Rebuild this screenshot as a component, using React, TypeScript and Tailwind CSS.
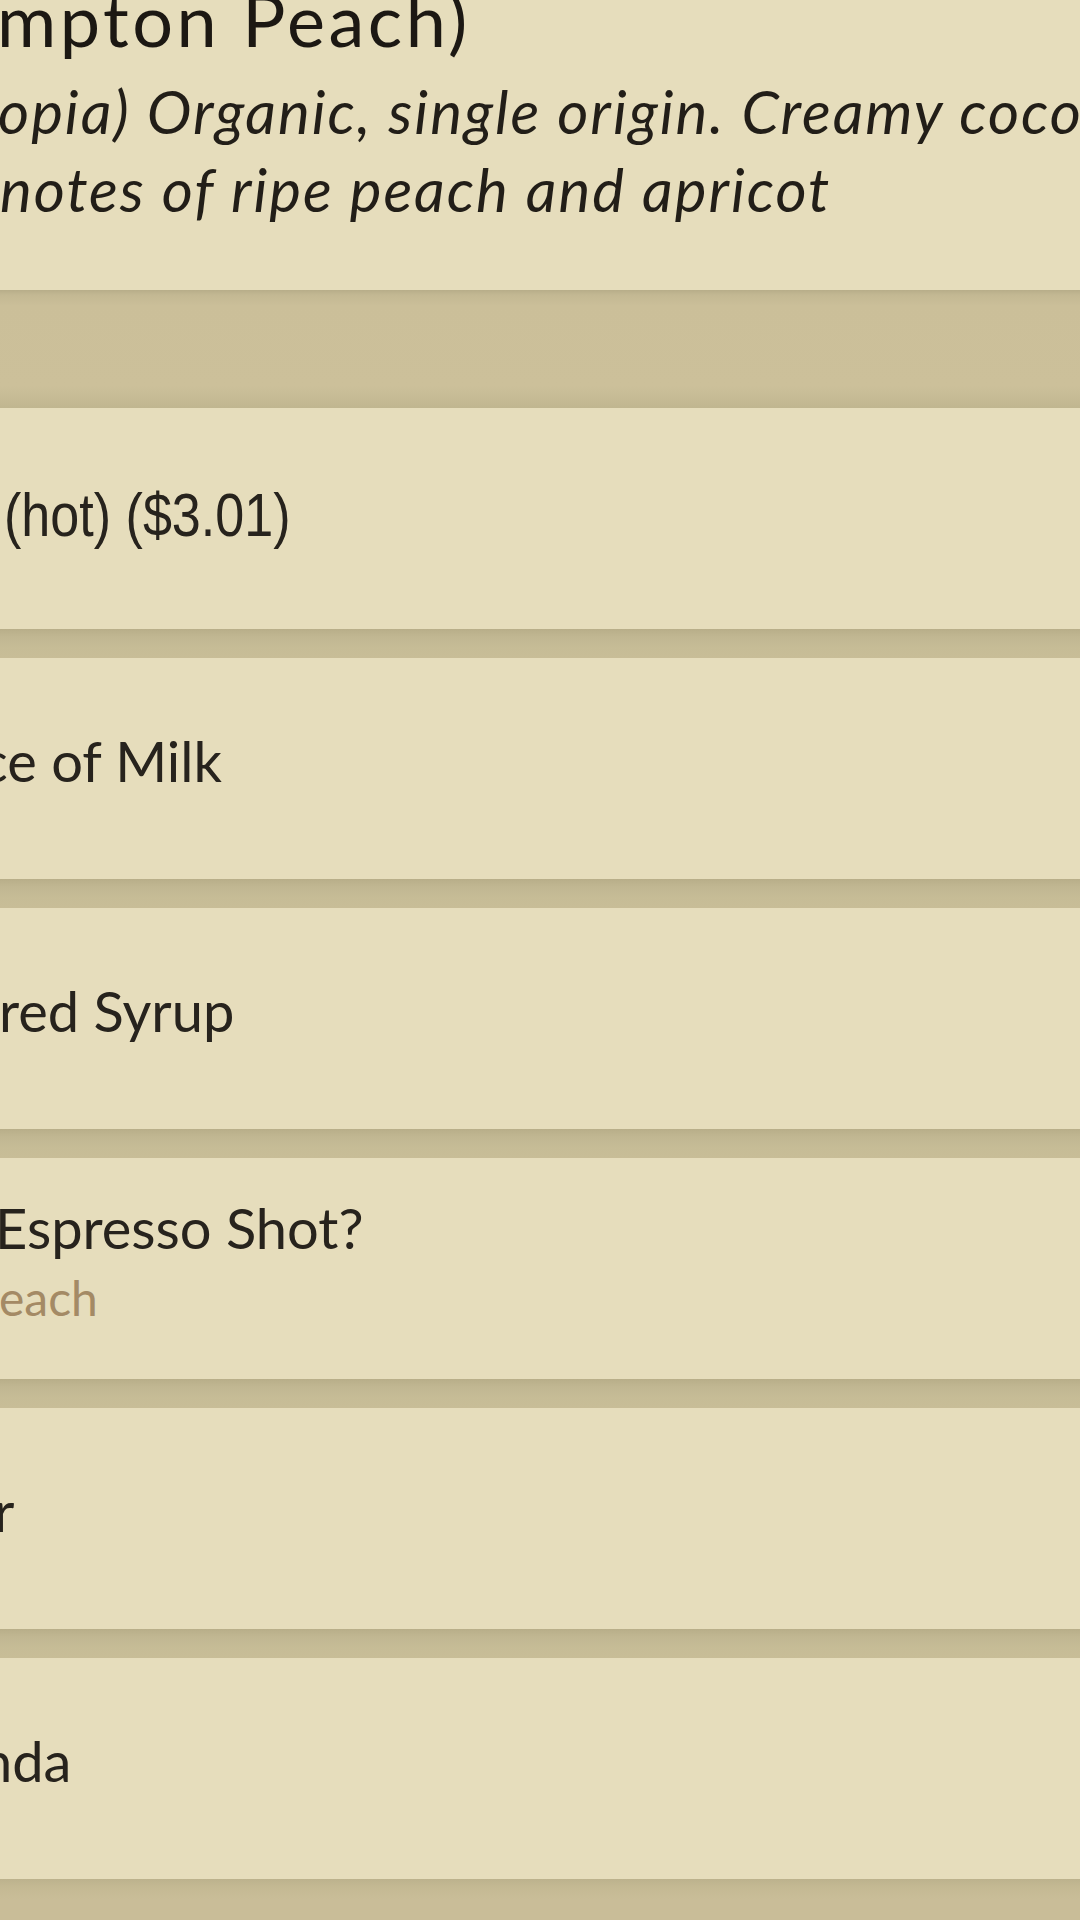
import React from 'react';

type Option = {
  label: string;
  shift: string;
  sub?: string;
  price?: boolean;
};

const options: Option[] = [
  { label: '(hot) ($3.01)', shift: 'ml-[4px]', price: true },
  { label: 'ce of Milk', shift: '-ml-[19px]' },
  { label: 'red Syrup', shift: '-ml-[1px]' },
  { label: 'Espresso Shot?', shift: '-ml-[5px]', sub: 'each' },
  { label: 'r', shift: '-ml-[6px]' },
  { label: 'nda', shift: '-ml-[19px]' },
];

const Separator = () => (
  <div className="h-[29px] shrink-0 bg-[linear-gradient(to_bottom,#b8ae89_0px,#c1b792_8px,#c6bc96_18px,#c8bd97_29px)]" />
);

const OptionRow = ({ option }: { option: Option }) => (
  <div
    className={`h-[221px] shrink-0 flex flex-col justify-center overflow-hidden bg-[#e6ddbc] ${
      option.price ? 'pb-[6px]' : 'pb-4'
    }`}
  >
    {option.price ? (
      <div
        className={`${option.shift} whitespace-nowrap origin-left scale-x-[0.84] text-[62px] leading-[1.2] text-[#27231d] [font-family:'Liberation_Sans',Arial,sans-serif]`}
      >
        {option.label}
      </div>
    ) : (
      <div className={`${option.shift} whitespace-nowrap text-[56px] leading-[1.2] text-[#27231d]`}>
        {option.label}
      </div>
    )}
    {option.sub && (
      <div className="mt-[8px] -ml-[1px] whitespace-nowrap text-[48px] leading-[1.2] text-[#a48a65]">{option.sub}</div>
    )}
  </div>
);

export default function App() {
  return (
    <div className="w-[1080px] h-[1920px] overflow-hidden flex flex-col bg-[#e6ddbc] [font-family:Lato,'Noto_Sans',sans-serif]">
      <div className="h-[290px] shrink-0 overflow-hidden">
        <h1 className="-mt-[17px] -ml-[3px] whitespace-nowrap text-[72px] leading-[72px] tracking-[3.5px] text-[#1c1813]">
          mpton Peach)
        </h1>
        <div className="mt-[17px] italic text-[60px] leading-[78px] tracking-[2px] text-[#221e18]">
          <p className="whitespace-nowrap -ml-[2px]">opia) Organic, single origin. Creamy coconut and</p>
          <p className="whitespace-nowrap"> notes of ripe peach and apricot</p>
        </div>
      </div>

      <div className="h-[118px] shrink-0 bg-[linear-gradient(to_bottom,#b7ad89_0px,#c3b893_5px,#cbbf99_16px,#ccc09a_96px,#c5ba94_110px,#c0b690_118px)]" />

      {options.map((option, i) => (
        <React.Fragment key={i}>
          {i > 0 && <Separator />}
          <OptionRow option={option} />
        </React.Fragment>
      ))}

      <div className="flex-1 bg-[linear-gradient(to_bottom,#bcb28d_0px,#c4b993_8px,#c9bd98_20px)]" />
    </div>
  );
}
